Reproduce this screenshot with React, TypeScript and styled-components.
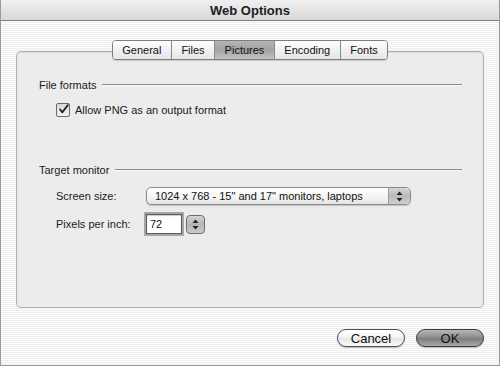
import React from 'react';
import styled, { createGlobalStyle } from 'styled-components';

const GlobalStyle = createGlobalStyle`
  html, body {
    margin: 0;
    padding: 0;
    background: #ffffff;
  }
  body {
    font-family: 'Liberation Sans', Arial, sans-serif;
    color: #1a1a1a;
  }
`;

const TABS = ['General', 'Files', 'Pictures', 'Encoding', 'Fonts'];

const App = () => {
  const [active, setActive] = React.useState('Pictures');
  const [allowPng, setAllowPng] = React.useState(true);
  const [ppi, setPpi] = React.useState('72');

  return (
    <>
      <GlobalStyle />
      <Window>
        <TitleBar>Web Options</TitleBar>
        <Body>
          <TabBar>
            {TABS.map((t) => (
              <Tab key={t} selected={t === active} onClick={() => setActive(t)}>
                {t}
              </Tab>
            ))}
          </TabBar>
          <Panel>
            <SectionHeader>
              <SectionLabel>File formats</SectionLabel>
              <Rule />
            </SectionHeader>
            <CheckRow onClick={() => setAllowPng(!allowPng)}>
              <CheckBox>
                {allowPng && (
                  <svg width='13' height='13' viewBox='0 0 13 13'>
                    <path
                      d='M2.5 6.5 L5.2 9.8 L11.5 1.5'
                      fill='none'
                      stroke='#1e1e1e'
                      strokeWidth='2.2'
                      strokeLinecap='round'
                      strokeLinejoin='round'
                    />
                  </svg>
                )}
              </CheckBox>
              <span>Allow PNG as an output format</span>
            </CheckRow>

            <SectionHeader spaced>
              <SectionLabel>Target monitor</SectionLabel>
              <Rule />
            </SectionHeader>
            <FormGrid>
              <FieldLabel>Screen size:</FieldLabel>
              <PopUp>
                <PopUpText>1024 x 768 - 15" and 17" monitors, laptops</PopUpText>
                <PopUpArrows>
                  <Arrows />
                </PopUpArrows>
              </PopUp>
              <FieldLabel>Pixels per inch:</FieldLabel>
              <InlineRow>
                <TextField value={ppi} onChange={(e) => setPpi(e.target.value)} />
                <Stepper>
                  <Arrows />
                </Stepper>
              </InlineRow>
            </FormGrid>
          </Panel>
          <Footer>
            <PushButton>Cancel</PushButton>
            <PushButton primary>OK</PushButton>
          </Footer>
        </Body>
      </Window>
    </>
  );
};

const Arrows = () => (
  <svg width='7' height='11' viewBox='0 0 7 11'>
    <path d='M3.5 0.5 L6.5 4 L0.5 4 Z' fill='#222' />
    <path d='M3.5 10.5 L6.5 7 L0.5 7 Z' fill='#222' />
  </svg>
);

export default App;

const Window = styled.div`
  width: 500px;
  height: 366px;
  box-sizing: border-box;
  display: flex;
  flex-direction: column;
  border: 1px solid #9a9a9a;
  border-top: none;
  overflow: hidden;
`;

const TitleBar = styled.div`
  height: 20px;
  flex: none;
  display: flex;
  align-items: center;
  justify-content: center;
  font-size: 13px;
  font-weight: bold;
  color: #222;
  background: linear-gradient(to bottom, #f0f0f0 0%, #e2e2e2 60%, #d8d8d8 100%);
  border-bottom: 1px solid #7c7c7c;
`;

const Body = styled.div`
  flex: 1;
  display: flex;
  flex-direction: column;
  padding: 19px 15px 0 15px;
  background: repeating-linear-gradient(
    to bottom,
    #fbfbfb 0px,
    #fbfbfb 1px,
    #efefef 1px,
    #efefef 2px
  );
`;

const TabBar = styled.div`
  display: flex;
  align-self: center;
  height: 18px;
  margin-bottom: -9px;
  position: relative;
  z-index: 1;
  border: 1px solid #7e7e7e;
  border-radius: 4px;
  overflow: hidden;
  box-shadow: 0 1px 1px rgba(0, 0, 0, 0.15);
`;

const Tab = styled.div<{ selected: boolean }>`
  display: flex;
  align-items: center;
  padding: 0 9.5px;
  font-size: 11px;
  color: #111;
  cursor: default;
  background: ${(p) =>
    p.selected
      ? 'linear-gradient(to bottom, #b5b5b5 0%, #a2a2a2 50%, #c4c4c4 100%)'
      : 'linear-gradient(to bottom, #ffffff 0%, #f1f1f1 50%, #e6e6e6 100%)'};
  & + & {
    border-left: 1px solid #8a8a8a;
  }
`;

const Panel = styled.div`
  height: 257px;
  box-sizing: border-box;
  background: #ececec;
  border: 1px solid #b0b0b0;
  border-radius: 5px;
  padding: 26px 21px 0 22px;
  box-shadow: inset 0 1px 1px rgba(0, 0, 0, 0.08);
`;

const SectionHeader = styled.div<{ spaced?: boolean }>`
  display: flex;
  align-items: center;
  gap: 6px;
  height: 14px;
  margin-top: ${(p) => (p.spaced ? '45px' : '0')};
`;

const SectionLabel = styled.span`
  font-size: 11px;
  color: #1a1a1a;
`;

const Rule = styled.div`
  flex: 1;
  height: 1px;
  background: #8c8c8c;
  border-bottom: 1px solid #f8f8f8;
`;

const CheckRow = styled.div`
  display: flex;
  align-items: center;
  gap: 5px;
  height: 16px;
  margin-top: 10px;
  margin-left: 17px;
  font-size: 11px;
  cursor: default;
`;

const CheckBox = styled.div`
  width: 12px;
  height: 12px;
  border: 1px solid #6a6a6a;
  border-radius: 2px;
  background: linear-gradient(to bottom, #d8d8d8, #f4f4f4);
  display: flex;
  align-items: center;
  justify-content: center;
  svg {
    margin-top: -2px;
    margin-left: 1px;
  }
`;

const FormGrid = styled.div`
  display: grid;
  grid-template-columns: 90px auto;
  grid-template-rows: 18px 20px;
  row-gap: 9px;
  align-items: center;
  justify-items: start;
  margin-top: 10px;
  margin-left: 17px;
`;

const FieldLabel = styled.span`
  font-size: 11px;
  color: #1a1a1a;
`;

const PopUp = styled.div`
  width: 265px;
  height: 18px;
  box-sizing: border-box;
  display: flex;
  align-items: stretch;
  border: 1px solid #8a8a8a;
  border-radius: 5px;
  overflow: hidden;
  background: linear-gradient(to bottom, #ffffff 0%, #f3f3f3 60%, #e4e4e4 100%);
  box-shadow: 0 1px 1px rgba(0, 0, 0, 0.18);
`;

const PopUpText = styled.span`
  flex: 1;
  display: flex;
  align-items: center;
  padding-left: 8px;
  font-size: 11px;
  color: #111;
`;

const PopUpArrows = styled.span`
  width: 21px;
  display: flex;
  align-items: center;
  justify-content: center;
  border-left: 1px solid #9a9a9a;
  background: linear-gradient(to bottom, #d6d6d6 0%, #b9b9b9 50%, #cfcfcf 100%);
`;

const InlineRow = styled.div`
  display: flex;
  align-items: center;
  gap: 4px;
`;

const TextField = styled.input`
  width: 36px;
  height: 20px;
  box-sizing: border-box;
  padding: 0 3px;
  font-family: 'Liberation Sans', Arial, sans-serif;
  font-size: 11px;
  color: #111;
  background: #fff;
  border: 1px solid #5a5a5a;
  outline: none;
  box-shadow: 0 0 0 2px #a6a6a6, inset 0 1px 1px rgba(0, 0, 0, 0.2);
`;

const Stepper = styled.div`
  width: 17px;
  height: 17px;
  display: flex;
  align-items: center;
  justify-content: center;
  border: 1px solid #6e6e6e;
  border-radius: 4px;
  background: linear-gradient(to bottom, #d4d4d4 0%, #b4b4b4 50%, #cccccc 100%);
`;

const Footer = styled.div`
  display: flex;
  justify-content: flex-end;
  gap: 11px;
  padding: 21px 0 0 0;
`;

const PushButton = styled.button<{ primary?: boolean }>`
  width: 68px;
  height: 18px;
  box-sizing: border-box;
  padding: 0;
  font-family: 'Liberation Sans', Arial, sans-serif;
  font-size: 13px;
  color: #111;
  border: 1px solid ${(p) => (p.primary ? '#3e3e3e' : '#4e4e4e')};
  border-radius: 9px;
  background: ${(p) =>
    p.primary
      ? 'linear-gradient(to bottom, #b8b8b8 0%, #8f8f8f 45%, #7e7e7e 55%, #a9a9a9 100%)'
      : 'linear-gradient(to bottom, #ffffff 0%, #f4f4f4 45%, #e6e6e6 55%, #fbfbfb 100%)'};
  box-shadow: 0 1px 1px rgba(0, 0, 0, 0.25);
  cursor: default;
`;
